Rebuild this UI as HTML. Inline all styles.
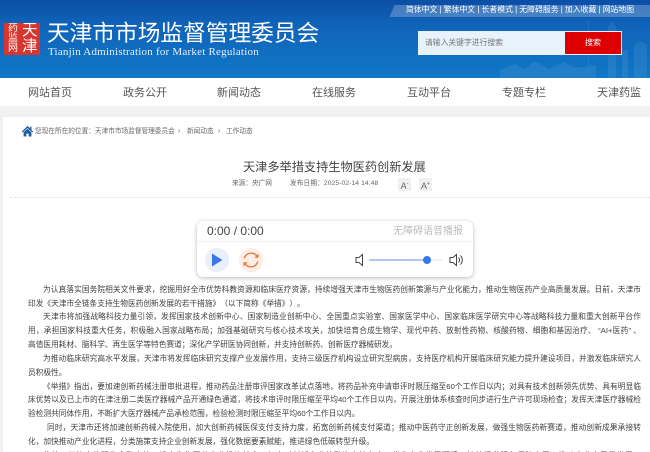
<!DOCTYPE html>
<html lang="zh-CN">
<head>
<meta charset="utf-8">
<title>天津市市场监督管理委员会</title>
<style>
html,body{margin:0;padding:0;width:650px;height:452px;overflow:hidden;background:#fff}
body{position:relative;font-family:"Liberation Sans","Noto Sans CJK SC",sans-serif;text-spacing-trim:space-all}
.a{position:absolute;white-space:nowrap}
#hd{position:absolute;left:0;top:0;width:650px;height:78px;background:linear-gradient(180deg,#0b4ea6 0,#0f63b8 30%,#1177c6 100%);overflow:hidden}
.nav{position:absolute;top:79px;height:28px;line-height:28px;font-size:11px;color:#555;white-space:nowrap;filter:blur(.2px)}
.l{position:absolute;left:28px;width:613px;height:14px;line-height:14px;font-size:7.7px;color:#404040;white-space:nowrap;filter:blur(.3px)}
.j{text-align:justify;text-align-last:justify;white-space:normal}
.i{padding-left:15px;width:598px}
</style>
</head>
<body>
<div id="hd">
  <svg class="a" style="left:500px;top:15px" width="150" height="63" viewBox="0 0 150 63">
    <g fill="#fff" opacity=".07">
      <rect x="88" y="5" width="1" height="58"/>
      <path d="M108 63V12l4-5 4 5v51z"/>
      <path d="M122 63V35h6v28z"/>
      <path d="M134 63V30l7-4 6 4v33z"/>
      <path d="M0 63v-8l15-6 10 5 10-8 14 8 15-7 12 6 20-3v13z"/>
    </g>
  </svg>
  <div class="a" style="left:4px;top:23px;width:36px;height:32px;background:#d8352e;overflow:hidden">
    <div class="a" style="left:18px;top:0;width:17px;font-size:15.5px;line-height:16px;color:#fff;white-space:normal;filter:blur(.3px)">天津</div>
    <div class="a" style="left:4px;top:1px;width:12px;font-size:10px;line-height:10.2px;color:#fff;white-space:normal;filter:blur(.3px)">药监网</div>
  </div>
  <div class="a" style="left:47px;top:19px;font-size:22.7px;line-height:28px;color:#fff;filter:blur(.2px)">天津市市场监督管理委员会</div>
  <div class="a" style="left:48px;top:45px;font-family:'Liberation Serif',serif;font-size:11px;line-height:14px;color:#e6f0fa;letter-spacing:.22px;filter:blur(.2px)">Tianjin Administration for Market Regulation</div>

  <div class="a" style="left:392px;top:5px;width:270px;height:12px;background:rgba(255,255,255,.24);transform:skewX(-22deg)"></div>
  <div class="a" style="left:406px;top:3px;font-size:7.85px;line-height:14px;color:#fff;filter:blur(.25px)">简体中文 | 繁体中文 | 长者模式 | 无障碍服务 | 加入收藏 | 网站地图</div>

  <div class="a" style="left:418px;top:31px;width:204px;height:24px;background:#e8f2fb"></div>
  <div class="a" style="left:565px;top:32px;width:56px;height:22px;background:#de0000"></div>
  <div class="a" style="left:425px;top:36px;font-size:7.8px;line-height:14px;color:#777;filter:blur(.25px)">请输入关键字进行搜索</div>
  <div class="a" style="left:585px;top:36px;font-size:8px;line-height:14px;color:#fff;filter:blur(.2px)">搜索</div>
</div>

<div class="nav" style="left:28px">网站首页</div>
<div class="nav" style="left:123px">政务公开</div>
<div class="nav" style="left:217px">新闻动态</div>
<div class="nav" style="left:312px">在线服务</div>
<div class="nav" style="left:407px">互动平台</div>
<div class="nav" style="left:502px">专题专栏</div>
<div class="nav" style="left:597px">天津药监</div>

<div class="a" style="left:0;top:106px;width:650px;height:11px;background:#f1f1f1"></div>
<div class="a" style="left:0;top:117px;width:3px;height:335px;background:#f1f1f1"></div>

<svg class="a" style="left:21px;top:125px" width="13" height="12" viewBox="0 0 13 12">
  <path fill="#1c5c9c" d="M6.5 1 .8 6.6l.9.9L6.5 3l4.8 4.5.9-.9-1.7-1.6V1.6H9.2v1.6z"/>
  <path fill="#1c5c9c" d="M2.6 7.4 6.5 3.8l3.9 3.6V11.5H7.7V8.6H5.3v2.9H2.6z"/>
</svg>
<div class="a" style="left:35px;top:125px;font-size:6.67px;line-height:14px;color:#666;filter:blur(.25px)">您现在所在的位置：天津市市场监督管理委员会</div>
<div class="a" style="left:178px;top:125px;font-size:7px;line-height:14px;color:#666">&#8250;</div>
<div class="a" style="left:187px;top:125px;font-size:6.67px;line-height:14px;color:#666;filter:blur(.25px)">新闻动态</div>
<div class="a" style="left:218px;top:125px;font-size:7px;line-height:14px;color:#666">&#8250;</div>
<div class="a" style="left:226px;top:125px;font-size:6.67px;line-height:14px;color:#666;filter:blur(.25px)">工作动态</div>

<div class="a" style="left:243px;top:157px;font-size:12.2px;line-height:20px;color:#444;filter:blur(.15px)">天津多举措支持生物医药创新发展</div>
<div class="a" style="left:232px;top:177px;font-size:6.67px;line-height:14px;color:#666;filter:blur(.2px)">来源：央广网</div>
<div class="a" style="left:290px;top:177px;font-size:6.67px;line-height:14px;color:#666;letter-spacing:.12px;filter:blur(.2px)">发布日期：2025-02-14 14:48</div>

<div class="a" style="left:398px;top:178px;width:13px;height:13px;background:#f0f0f0;text-align:center;font-size:9px;line-height:13px;color:#666;font-family:'Liberation Sans',sans-serif">A<span style="font-size:5px;vertical-align:4px">-</span></div>
<div class="a" style="left:419px;top:178px;width:13px;height:13px;background:#f0f0f0;text-align:center;font-size:9px;line-height:13px;color:#666;font-family:'Liberation Sans',sans-serif">A<span style="font-size:5px;vertical-align:4px">+</span></div>

<div class="a" style="left:10px;top:197px;width:640px;height:0;border-top:1px dotted #ddd"></div>

<div class="a" style="left:197px;top:221px;width:276px;height:56px;background:#fff;border-radius:6px;box-shadow:0 1px 4px rgba(0,0,0,.28)"></div>
<div class="a" style="left:207px;top:222px;font-size:12px;line-height:18px;color:#444;font-family:'Liberation Sans',sans-serif">0:00 / 0:00</div>
<div class="a" style="left:393px;top:224px;font-size:10px;line-height:15px;color:#bbb;filter:blur(.15px)">无障碍语音播报</div>
<div class="a" style="left:197px;top:241px;width:276px;height:1px;background:#f1f1f1"></div>

<svg class="a" style="left:197px;top:242px" width="276" height="35" viewBox="0 0 276 35">
  <circle cx="20" cy="18" r="12.2" fill="#eaf0fb"/>
  <path d="M15 11.5v13l10.5-6.5z" fill="#3b78e7"/>
  <circle cx="54" cy="18" r="12.2" fill="#fdeee6"/>
  <path d="M47.3 16.5a7 7 0 0 1 12.6-2.3M60.7 19.5a7 7 0 0 1-12.6 2.3" fill="none" stroke="#f0733c" stroke-width="1.3"/>
  <path d="M61.5 11.5v4.2h-4.2zM46.5 24.5v-4.2h4.2z" fill="#f0733c"/>
  <path d="M162 15.5h-3v5h3l3.5 3v-11z" fill="none" stroke="#444" stroke-width="1"/>
  <rect x="172" y="17.2" width="74" height="1.6" rx=".8" fill="#eeeeee"/>
  <rect x="172" y="17.2" width="58" height="1.6" rx=".8" fill="#9bb9ee"/>
  <circle cx="230" cy="18" r="4" fill="#3b78e7"/>
  <path d="M256 15.5h-3v5h3l3.5 3v-11z" fill="none" stroke="#444" stroke-width="1"/>
  <path d="M261.5 15.5a3.5 3.5 0 0 1 0 5M263.5 13.5a6.5 6.5 0 0 1 0 9" fill="none" stroke="#444" stroke-width="1"/>
</svg>

<div class="l j i" style="top:282.5px">为认真落实国务院相关文件要求，挖掘用好全市优势科教资源和临床医疗资源，持续增强天津市生物医药创新策源与产业化能力，推动生物医药产业高质量发展。日前，天津市</div>
<div class="l" style="top:296.5px">印发《天津市全链条支持生物医药创新发展的若干措施》（以下简称《举措》）。</div>
<div class="l j i" style="top:310px">天津市将加强战略科技力量引领，发挥国家技术创新中心、国家制造业创新中心、全国重点实验室、国家医学中心、国家临床医学研究中心等战略科技力量和重大创新平台作</div>
<div class="l j" style="top:324px">用，承担国家科技重大任务，积极融入国家战略布局；加强基础研究与核心技术攻关，加快培育合成生物学、现代中药、放射性药物、核酸药物、细胞和基因治疗、 “AI+医药” 、</div>
<div class="l" style="top:337.5px">高值医用耗材、脑科学、再生医学等特色赛道；深化产学研医协同创新，并支持创新药、创新医疗器械研发。</div>
<div class="l j i" style="top:352px">为推动临床研究高水平发展，天津市将发挥临床研究支撑产业发展作用，支持三级医疗机构设立研究型病房，支持医疗机构开展临床研究能力提升建设项目，并激发临床研究人</div>
<div class="l" style="top:365.5px">员积极性。</div>
<div class="l j i" style="top:379.5px">《举措》指出，要加速创新药械注册审批进程，推动药品注册审评国家改革试点落地，将药品补充申请审评时限压缩至60个工作日以内；对具有技术创新领先优势、具有明显临</div>
<div class="l j" style="top:393px">床优势以及已上市的在津注册二类医疗器械产品开通绿色通道，将技术审评时限压缩至平均40个工作日以内，开展注册体系核查时同步进行生产许可现场检查；发挥天津医疗器械检</div>
<div class="l" style="top:406.5px">验检测共同体作用，不断扩大医疗器械产品承检范围，检验检测时限压缩至平均60个工作日以内。</div>
<div class="l j i" style="top:420.5px;padding-left:19px;width:594px">同时，天津市还将加速创新药械入院使用，加大创新药械医保支付支持力度，拓宽创新药械支付渠道；推动中医药守正创新发展，做强生物医药新赛道，推动创新成果承接转</div>
<div class="l" style="top:434.5px">化，加快推动产业化进程，分类施策支持企业创新发展，强化数据要素赋能，推进绿色低碳转型升级。</div>
<div class="l j i" style="top:448.5px">此外，天津市将强化金融支持，设立生物医药产业投资基金，加大对创新企业的融资支持力度，优化产业发展环境，持续提升服务保障水平，推动产业高质量发展。</div>
</body>
</html>
